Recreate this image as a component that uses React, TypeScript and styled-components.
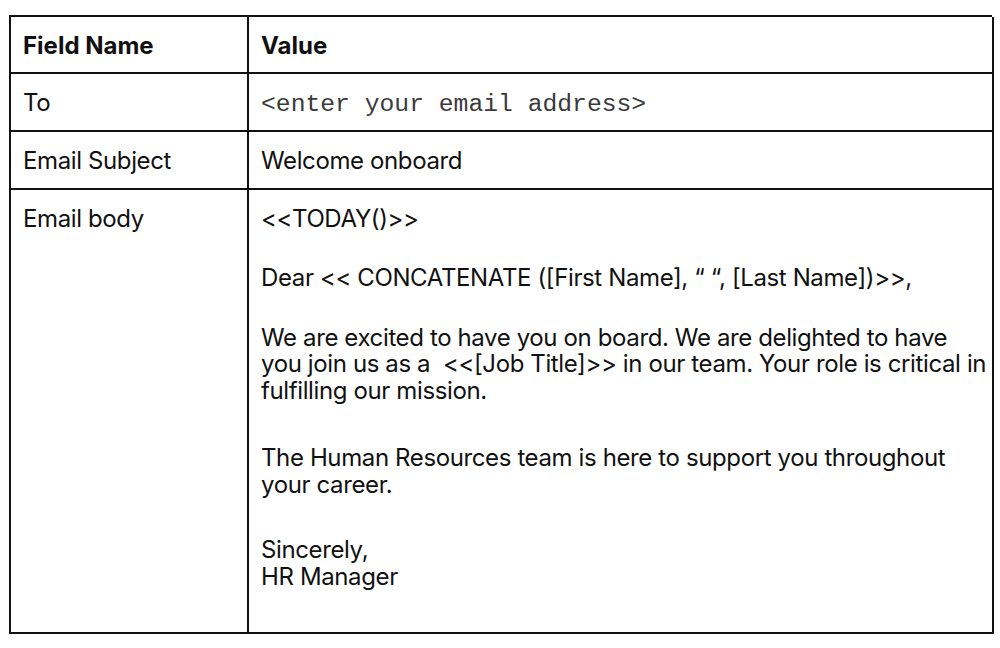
import React from "react";
import styled, { createGlobalStyle } from "styled-components";

const Global = createGlobalStyle`
  html, body { margin: 0; padding: 0; background: #ffffff; }
  body { font-family: Inter, "Noto Sans", sans-serif; color: #111; }
`;

const Page = styled.div`
  width: 1000px;
  height: 648px;
  padding: 15px 0 0 9px;
  box-sizing: border-box;
`;

const Table = styled.div`
  display: grid;
  grid-template-columns: 238px 745px;
  grid-template-rows: 57px 58px 58px 444px;
  width: 983px;
  border-top: 2px solid #111;
  border-left: 2px solid #111;
  box-sizing: border-box;
`;

const Cell = styled.div<{ $bold?: boolean; $mono?: boolean }>`
  border-right: 2px solid #111;
  border-bottom: 2px solid #111;
  padding: ${(p) => (p.$mono ? "17px" : "15.5px")} 0 0 12px;
  font-family: ${(p) =>
    p.$mono ? `"Liberation Mono", "Courier New", monospace` : `Inter, "Noto Sans", sans-serif`};
  font-size: ${(p) => (p.$mono ? "24.7px" : "24px")};
  font-weight: ${(p) => (p.$bold ? 700 : 400)};
  line-height: 26.5px;
  letter-spacing: ${(p) => (p.$mono ? "0" : p.$bold ? "0" : "-0.38px")};
  color: ${(p) => (p.$mono ? "#3a3a3a" : "#111")};
  box-sizing: border-box;
`;

const Para = styled.p<{ $gap?: number }>`
  margin: 0 0 ${(p) => p.$gap ?? 33}px 0;
  &:last-child { margin-bottom: 0; }
`;

export default function App() {
  return (
    <>
      <Global />
      <Page>
        <Table>
          <Cell $bold>Field Name</Cell>
          <Cell $bold>Value</Cell>
          <Cell>To</Cell>
          <Cell $mono>&lt;enter your email address&gt;</Cell>
          <Cell>Email Subject</Cell>
          <Cell>Welcome onboard</Cell>
          <Cell>Email body</Cell>
          <Cell>
            <Para $gap={33}>&lt;&lt;TODAY()&gt;&gt;</Para>
            <Para $gap={33}>Dear &lt;&lt; CONCATENATE ([First Name], “ “, [Last Name])&gt;&gt;,</Para>
            <Para $gap={41}>
              We are excited to have you on board. We are delighted to have you join us as a&nbsp;
              &lt;&lt;[Job Title]&gt;&gt; in our team. Your role is critical in fulfilling our mission.
            </Para>
            <Para $gap={39}>The Human Resources team is here to support you throughout your career.</Para>
            <Para>
              Sincerely,
              <br />
              HR Manager
            </Para>
          </Cell>
        </Table>
      </Page>
    </>
  );
}
